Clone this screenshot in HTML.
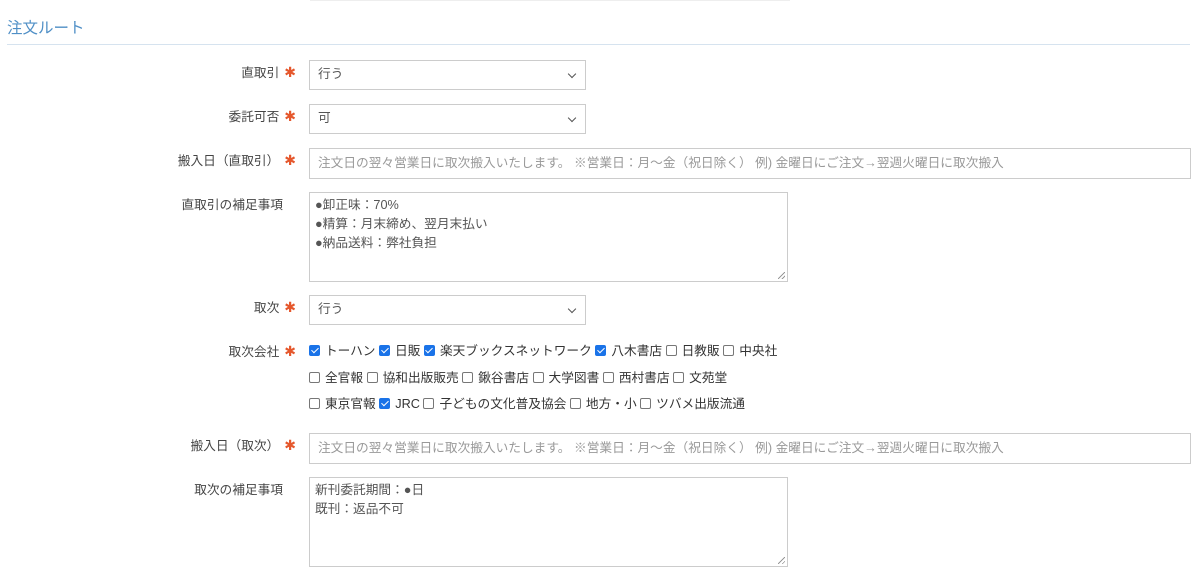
<!DOCTYPE html>
<html><head><meta charset="utf-8"><style>
body{margin:0;width:1200px;height:573px;background:#fff;font-family:"Liberation Sans","Noto Sans CJK JP",sans-serif;font-size:12.7px;color:#333;position:relative;overflow:hidden}
.a{position:absolute}
.title{left:7px;top:16px;font-size:15.5px;color:#4f8fc6}
.hr{left:7px;top:44px;width:1183px;height:1px;background:#d6e3ef}
.lbl{right:904px;text-align:right;white-space:nowrap;color:#444;margin-top:-2px}
.lbl b{color:#e5572c;font-weight:normal;margin-left:5px;font-size:14px;font-family:"DejaVu Sans",sans-serif}
.nb{right:917px}
.box{border:1px solid #ccc;background:#fff;box-sizing:border-box;padding:0 8px;color:#555;white-space:nowrap}
.sel{left:309px;width:277px;height:30px;line-height:27px}
.sel:after{content:"";position:absolute;right:10px;top:10px;width:5px;height:5px;border-right:1.5px solid #555;border-bottom:1.5px solid #555;transform:rotate(45deg)}
.inp{left:309px;width:882px;height:31px;line-height:28px;color:#999}
.ta{left:309px;width:479px;height:90px;padding:3px 5px;line-height:19px;color:#555}
.ta:after{content:"";position:absolute;right:2px;bottom:2px;width:7px;height:7px;background:linear-gradient(135deg,transparent 45%,#999 45%,#999 55%,transparent 55%,transparent 75%,#999 75%,#999 85%,transparent 85%)}
.cbrow{left:309px;white-space:nowrap;color:#333;margin-top:-2px}
.cb{display:inline-block;width:9px;height:9px;border:1px solid #777;border-radius:2px;vertical-align:-1px;margin-right:5px;position:relative}
.cb.on{background:#1a73e8;border-color:#1a73e8}
.cb.on:after{content:"";position:absolute;left:2.5px;top:0px;width:3px;height:6px;border-right:1.5px solid #fff;border-bottom:1.5px solid #fff;transform:rotate(45deg)}
</style></head><body>
<div class="a" style="left:310px;top:0;width:480px;height:1px;background:#eee"></div>
<div class="a title">注文ルート</div>
<div class="a hr"></div>

<div class="a lbl" style="top:64px">直取引<b>✱</b></div>
<div class="a box sel" style="top:60px">行う</div>
<div class="a lbl" style="top:108px">委託可否<b>✱</b></div>
<div class="a box sel" style="top:104px">可</div>
<div class="a lbl" style="top:152px">搬入日（直取引）<b>✱</b></div>
<div class="a box inp" style="top:148px">注文日の翌々営業日に取次搬入いたします。 ※営業日：月～金（祝日除く） 例) 金曜日にご注文→翌週火曜日に取次搬入</div>
<div class="a lbl nb" style="top:196px">直取引の補足事項</div>
<div class="a box ta" style="top:192px">●卸正味：70%<br>●精算：月末締め、翌月末払い<br>●納品送料：弊社負担</div>
<div class="a lbl" style="top:299px">取次<b>✱</b></div>
<div class="a box sel" style="top:295px">行う</div>
<div class="a lbl" style="top:343px">取次会社<b>✱</b></div>
<div class="a cbrow" style="top:342px"><span class="cb on"></span>トーハン <span class="cb on"></span>日販 <span class="cb on"></span>楽天ブックスネットワーク <span class="cb on"></span>八木書店 <span class="cb"></span>日教販 <span class="cb"></span>中央社</div>
<div class="a cbrow" style="top:369px"><span class="cb"></span>全官報 <span class="cb"></span>協和出版販売 <span class="cb"></span>鍬谷書店 <span class="cb"></span>大学図書 <span class="cb"></span>西村書店 <span class="cb"></span>文苑堂</div>
<div class="a cbrow" style="top:395px"><span class="cb"></span>東京官報 <span class="cb on"></span>JRC <span class="cb"></span>子どもの文化普及協会 <span class="cb"></span>地方・小 <span class="cb"></span>ツバメ出版流通</div>
<div class="a lbl" style="top:437px">搬入日（取次）<b>✱</b></div>
<div class="a box inp" style="top:433px">注文日の翌々営業日に取次搬入いたします。 ※営業日：月～金（祝日除く） 例) 金曜日にご注文→翌週火曜日に取次搬入</div>
<div class="a lbl nb" style="top:481px">取次の補足事項</div>
<div class="a box ta" style="top:477px">新刊委託期間：●日<br>既刊：返品不可</div>
</body></html>
